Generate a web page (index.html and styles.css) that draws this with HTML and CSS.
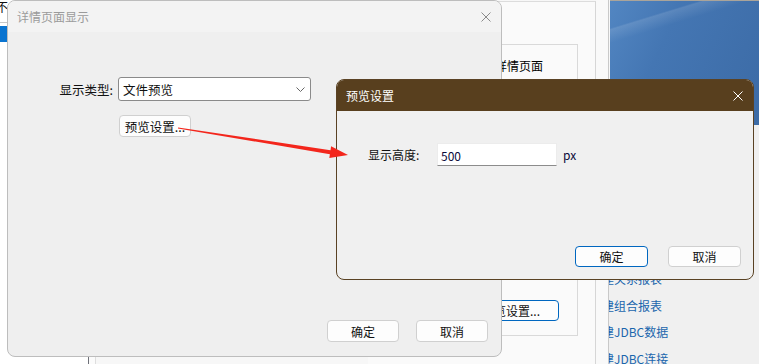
FILE: index.html
```html
<!DOCTYPE html>
<html lang="zh-CN">
<head>
<meta charset="UTF-8">
<title>预览设置</title>
<link rel="stylesheet" href="styles.css">
</head>
<body>
<!-- background app window -->
<div class="app">
    <div class="tree">
        <div class="tree-item">不</div>
        <div class="tree-sel"></div>
    </div>
    <div class="split"></div>
    <div class="main">
        <div class="panel">
            <div class="box">
                <div class="box-title">详情页面</div>
                <div class="box-foot">
                    <button class="btn btn-default btn-wide">预览设置...</button>
                </div>
            </div>
        </div>
        <div class="gutter"></div>
    </div>
</div>

<div class="side">
    <div class="wallpaper"></div>
    <div class="links">
        <div class="link">建关系报表</div>
        <div class="link">建组合报表</div>
        <div class="link">建JDBC数据</div>
        <div class="link">建JDBC连接</div>
    </div>
</div>

<!-- dialog 1 -->
<div class="dialog dlg-detail">
    <div class="dlg-title">
        <span>详情页面显示</span>
        <svg class="close" width="10" height="10" viewBox="0 0 10 10"><path d="M0.5 0.5L9.5 9.5M9.5 0.5L0.5 9.5" stroke="currentColor" stroke-width="1"/></svg>
    </div>
    <div class="dlg-body">
        <div class="form">
            <div class="row">
                <label class="lbl">显示类型:</label>
                <div class="select">
                    <span>文件预览</span>
                    <svg width="9" height="5" viewBox="0 0 9 5"><path d="M0.5 0.5L4.5 4.5L8.5 0.5" fill="none" stroke="#666" stroke-width="1"/></svg>
                </div>
            </div>
            <div class="row">
                <span class="lbl"></span>
                <button class="btn btn-preview">预览设置...</button>
            </div>
        </div>
        <div class="dlg-foot">
            <button class="btn">确定</button>
            <button class="btn">取消</button>
        </div>
    </div>
</div>

<!-- dialog 2 -->
<div class="dialog dlg-preview">
    <div class="dlg-title">
        <span>预览设置</span>
        <svg class="close" width="10" height="10" viewBox="0 0 10 10"><path d="M0.5 0.5L9.5 9.5M9.5 0.5L0.5 9.5" stroke="currentColor" stroke-width="1"/></svg>
    </div>
    <div class="dlg-body">
        <div class="form">
            <div class="row">
                <label class="lbl">显示高度:</label>
                <div class="input">500</div>
                <span class="unit">px</span>
            </div>
        </div>
        <div class="dlg-foot">
            <button class="btn btn-default">确定</button>
            <button class="btn">取消</button>
        </div>
    </div>
</div>

<!-- annotation arrow -->
<svg class="arrow" width="759" height="364" viewBox="0 0 759 364">
    <polygon points="177.9,128.5 178.1,127.5 330.5,150.2 331.1,146.3 348,155 329.3,158.1 329.9,154.2" fill="#f3261c"/>
</svg>
</body>
</html>
```

FILE: styles.css
```css
body {
    margin: 0;
    width: 759px;
    height: 364px;
    overflow: hidden;
    position: relative;
    background: #f7f7f7;
    font-family: "Noto Sans CJK SC", "Microsoft YaHei", sans-serif;
    font-size: 12px;
    color: #111;
}
button {
    font-family: inherit;
    font-size: 12px;
    color: #111;
    cursor: pointer;
}

/* background app */
.app {
    position: absolute;
    left: 0;
    top: 0;
    width: 608px;
    height: 364px;
    display: flex;
    border-right: 1px solid #c9c9c9;
}
.tree {
    width: 88px;
    background: #fff;
    border-right: 1px solid #6e7078;
}
.tree-item {
    height: 22px;
    line-height: 14px;
    margin-left: -4px;
    border-bottom: 1px solid #c8c8c8;
    overflow: hidden;
}
.tree-sel {
    margin-top: 3px;
    height: 16px;
    background: #0a74d0;
}
.split {
    width: 6px;
    border-right: 1px solid #dedede;
    background: #fbfbfb;
    margin-right: 7px;
}
.main {
    flex: 1;
    display: flex;
    justify-content: flex-end;
    background: #f7f7f7;
}
.panel {
    width: 210px;
    margin-top: 1px;
    border-top: 1px solid #dcdcdc;
    border-right: 1px solid #d6d6d6;
    background: #fafafa;
    padding: 42px 17px 0 0;
}
.box {
    height: 292px;
    box-sizing: border-box;
    border: 1px solid #d9d9d9;
    display: flex;
    flex-direction: column;
    justify-content: space-between;
    padding: 12px 18px 14px 0;
}
.box-title {
    padding-left: 126px;
    font-size: 12px;
    color: #000;
}
.box-foot {
    display: flex;
    justify-content: flex-end;
}
.gutter {
    width: 12px;
    background: #f9f9f9;
}

.side {
    position: absolute;
    left: 609px;
    top: 0;
    width: 150px;
    height: 364px;
    display: flex;
    flex-direction: column;
}
.wallpaper {
    height: 124px;
    margin-left: 1px;
    border-top: 1px solid #aaa49a;
    background:
        linear-gradient(163deg, transparent 0 16%, rgba(255,255,255,0.12) 17%, transparent 25%),
        linear-gradient(115deg, #5286c2 0%, #4476b3 35%, #3c6ba6 100%);
}
.links {
    flex: 1;
    background: #f0f0f0;
    padding-top: 141px;
    overflow: hidden;
}
.link {
    line-height: 26.5px;
    margin-left: -7px;
    color: #1b66ad;
    white-space: nowrap;
}

/* dialogs */
.dialog {
    position: absolute;
    display: flex;
    flex-direction: column;
    border-radius: 8px;
    overflow: hidden;
    background: #efefef;
}
.dlg-title {
    height: 31px;
    flex-shrink: 0;
    display: flex;
    align-items: center;
    justify-content: space-between;
    padding: 0 10px 0 9px;
}
.dlg-body {
    flex: 1;
    display: flex;
    flex-direction: column;
    justify-content: space-between;
}
.form {
    display: flex;
    flex-direction: column;
}
.row {
    display: flex;
    align-items: center;
}
.dlg-foot {
    display: flex;
    justify-content: flex-end;
}
.btn {
    width: 72px;
    height: 22px;
    padding: 0;
    background: #fdfdfd;
    border: 1px solid #d0d0d0;
    border-radius: 4px;
}
.btn-default {
    border-color: #0067c0;
}
.btn-wide {
    width: 96px;
    height: 21px;
}

.dlg-detail {
    left: 7px;
    top: 0;
    width: 493px;
    height: 355px;
    border: 1px solid #bdbdbd;
}
.dlg-detail .dlg-title {
    background: #f3f3f3;
    color: #9b9b9b;
}
.dlg-detail .close {
    color: #8a8a8a;
}
.dlg-detail .form {
    padding-top: 45px;
    gap: 14px;
}
.dlg-detail .lbl {
    width: 105px;
    padding-right: 5px;
    text-align: right;
    font-size: 12.5px;
}
.dlg-detail .select {
    border: 1px solid #8a8a8a;
    border-radius: 3px;
    background: #fff;
    display: flex;
    align-items: center;
    justify-content: space-between;
    padding: 0 5px 0 4px;
    box-sizing: border-box;
    width: 193px;
    height: 24px;
    font-size: 12.5px;
}
.dlg-detail .btn-preview {
    margin-left: 1px;
    height: 22px;
    font-size: 12.5px;
}
.dlg-detail .dlg-foot {
    gap: 17px;
    padding: 0 13px 14px 0;
}

.dlg-preview {
    left: 336px;
    top: 79px;
    width: 416px;
    height: 199px;
    border: 1px solid #5a4224;
    background: #f0f0f0;
}
.dlg-preview .dlg-title {
    background: #583f1e;
    color: #fff;
    padding-left: 9px;
}
.dlg-preview .close {
    color: #fff;
}
.dlg-preview .form {
    padding: 32px 0 0 31px;
}
.dlg-preview .lbl {
    width: 69px;
}
.dlg-preview .input {
    width: 120px;
    height: 23px;
    box-sizing: border-box;
    background: #fff;
    border: 1px solid #ececec;
    border-bottom-color: #8c8c8c;
    padding: 3px 0 0 3px;
    color: #0b0b3a;
}
.dlg-preview .unit {
    margin-left: 6px;
    color: #0b0b3a;
}
.dlg-preview .dlg-foot {
    gap: 20px;
    padding: 0 12px 12px 0;
}
.dlg-preview .btn {
    width: 73px;
    height: 21px;
}

.arrow {
    position: absolute;
    left: 0;
    top: 0;
    pointer-events: none;
}
```
